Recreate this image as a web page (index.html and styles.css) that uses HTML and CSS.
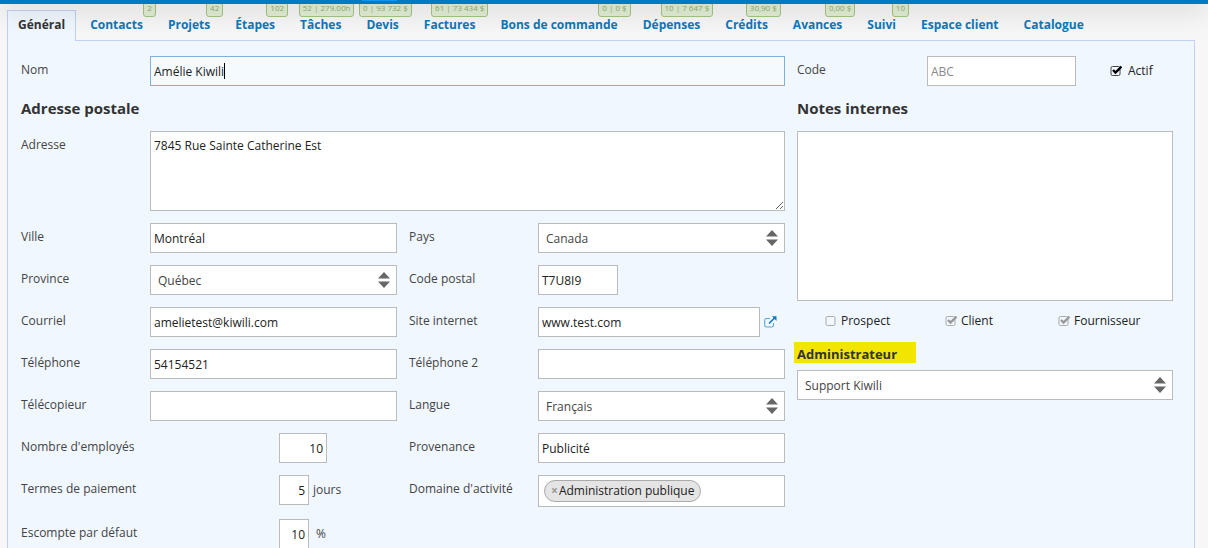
FILE: index.html
```html
<!DOCTYPE html>
<html lang="fr">
<head>
<meta charset="utf-8">
<meta name="viewport" content="width=device-width, initial-scale=1">
<title>Fiche client</title>
<link rel="stylesheet" href="styles.css">
</head>
<body>
<header class="topbar"><span class="topbar-mark"></span></header>
<div class="page">
  <nav class="tabs">
    <a href="#" class="tab active" aria-current="page">Général</a>
    <a href="#" class="tab">Contacts<span class="badge">2</span></a>
    <a href="#" class="tab">Projets<span class="badge">42</span></a>
    <a href="#" class="tab">Étapes<span class="badge">102</span></a>
    <a href="#" class="tab">Tâches<span class="badge">52 | 279.00h</span></a>
    <a href="#" class="tab">Devis<span class="badge">0 | 93 732 $</span></a>
    <a href="#" class="tab">Factures<span class="badge">61 | 73 434 $</span></a>
    <a href="#" class="tab">Bons de commande<span class="badge">0 | 0 $</span></a>
    <a href="#" class="tab">Dépenses<span class="badge">10 | 7 647 $</span></a>
    <a href="#" class="tab">Crédits<span class="badge">30,90 $</span></a>
    <a href="#" class="tab">Avances<span class="badge">0,00 $</span></a>
    <a href="#" class="tab">Suivi<span class="badge">10</span></a>
    <a href="#" class="tab">Espace client</a>
    <a href="#" class="tab">Catalogue</a>
  </nav>
  <form class="panel">
    <div class="main">
      <div class="row wide"><label for="nom">Nom</label><div class="field"><input class="box focused" id="nom" type="text" value="Amélie Kiwili"><span class="caret"></span></div></div>
      <h2 class="wide">Adresse postale</h2>
      <div class="row wide"><label for="adresse">Adresse</label><div class="field"><textarea class="box address" id="adresse">7845 Rue Sainte Catherine Est</textarea></div></div>
      <div class="row"><label for="ville">Ville</label><div class="field"><input class="box" id="ville" type="text" value="Montréal"></div></div>
      <div class="row"><label for="pays">Pays</label><div class="field"><select class="box" id="pays"><option>Canada</option></select></div></div>
      <div class="row"><label for="province">Province</label><div class="field"><select class="box" id="province"><option>Québec</option></select></div></div>
      <div class="row"><label for="cp">Code postal</label><div class="field"><input class="box postal" id="cp" type="text" value="T7U8I9"></div></div>
      <div class="row"><label for="courriel">Courriel</label><div class="field"><input class="box" id="courriel" type="text" value="amelietest@kiwili.com"></div></div>
      <div class="row"><label for="site">Site internet</label><div class="field"><input class="box" id="site" type="text" value="www.test.com"><a class="open" href="#" aria-label="Ouvrir le site"><svg width="13" height="12" viewBox="0 0 13 12" fill="none"><path d="M6 2.5H2.5Q.7 2.5.7 4.3V9.2Q.7 11 2.5 11H7.7Q9.5 11 9.5 9.2V7" stroke="#5ba6d6" stroke-width="1.1"/><path d="M5 7.5 11 1.5" stroke="#0b79bf" stroke-width="1.6"/><path d="M8 .3H12.5V5Z" fill="#0b79bf"/></svg></a></div></div>
      <div class="row"><label for="tel">Téléphone</label><div class="field"><input class="box" id="tel" type="text" value="54154521"></div></div>
      <div class="row"><label for="tel2">Téléphone 2</label><div class="field"><input class="box" id="tel2" type="text"></div></div>
      <div class="row"><label for="fax">Télécopieur</label><div class="field"><input class="box" id="fax" type="text"></div></div>
      <div class="row"><label for="langue">Langue</label><div class="field"><select class="box" id="langue"><option>Français</option></select></div></div>
      <div class="row numeric"><label for="employes">Nombre d'employés</label><div class="field"><input class="box count" id="employes" type="text" value="10"></div></div>
      <div class="row"><label for="prov">Provenance</label><div class="field"><input class="box" id="prov" type="text" value="Publicité"></div></div>
      <div class="row numeric"><label for="termes">Termes de paiement</label><div class="field"><input class="box short" id="termes" type="text" value="5"><span class="unit">jours</span></div></div>
      <div class="row"><span class="label">Domaine d'activité</span><div class="field"><div class="box tags"><span class="tag"><button type="button" aria-label="Retirer">×</button>Administration publique</span></div></div></div>
      <div class="row numeric"><label for="escompte">Escompte par défaut</label><div class="field"><input class="box short" id="escompte" type="text" value="10"><span class="unit percent">%</span></div></div>
    </div>
    <div class="side">
      <div class="row"><label for="code">Code</label><div class="field"><input class="box code" id="code" type="text" placeholder="ABC"><label class="check active-check"><input type="checkbox" checked>Actif</label></div></div>
      <h2><label for="notes">Notes internes</label></h2>
      <textarea class="box notes" id="notes"></textarea>
      <div class="kinds">
        <label class="check"><input type="checkbox" disabled>Prospect</label>
        <label class="check"><input type="checkbox" checked disabled>Client</label>
        <label class="check"><input type="checkbox" checked disabled>Fournisseur</label>
      </div>
      <h3><label for="admin">Administrateur</label></h3>
      <select class="box" id="admin"><option>Support Kiwili</option></select>
    </div>
  </form>
</div>
</body>
</html>
```

FILE: styles.css
```css
* { box-sizing: border-box; }
body {
  margin: 0;
  height: 100vh;
  display: flex;
  flex-direction: column;
  overflow: hidden;
  background: #f7f7f7;
  color: #444;
  font: 12px/20px "Open Sans", sans-serif;
}
.topbar {
  position: relative;
  z-index: 2;
  flex: none;
  height: 4px;
  background: #007ac3;
  box-shadow: 0 0 30px rgba(0, 0, 0, 0.6);
}
.topbar-mark {
  position: absolute;
  top: 0;
  left: 30%;
  width: 35px;
  height: 1px;
  background: #0c96f5;
}
.page {
  flex: 1;
  display: flex;
  flex-direction: column;
  padding: 6px 13px 0 7px;
}
.tabs { display: flex; gap: 3px; flex: none; }
.tab {
  position: relative;
  height: 30px;
  padding: 4px 10px 0;
  border: 1px solid transparent;
  border-bottom: 0;
  color: #0b78bb;
  font-size: 12px;
  font-weight: 700;
  line-height: 20px;
  text-decoration: none;
  white-space: nowrap;
}
.tab.active {
  z-index: 1;
  height: 31px;
  margin-bottom: -1px;
  border-color: #c3d0f5;
  background: #f0f7ff;
  color: #333;
}
.badge {
  position: absolute;
  right: -3px;
  bottom: 23px;
  padding: 0 3px 1px;
  border: 1px solid #a3c684;
  border-radius: 3px;
  background: #e3efd5;
  color: #8daf71;
  font-size: 8px;
  font-weight: 400;
  line-height: 14px;
}
.panel {
  flex: 1;
  display: grid;
  grid-template-columns: repeat(3, minmax(0, 1fr));
  gap: 12px;
  padding: 15px 21px 0 13px;
  border: 1px solid #c3d0f5;
  border-bottom: 0;
  background: #f0f7ff;
}
.main {
  grid-column: span 2;
  display: grid;
  grid-template-columns: repeat(2, minmax(0, 1fr));
  gap: 12px;
  align-content: start;
}
.wide { grid-column: 1 / -1; }
.row { display: flex; align-items: flex-start; }
.row > label, .label { flex: none; width: 129px; line-height: 28px; }
.numeric > label { width: 258px; }
.field { position: relative; flex: 1; min-width: 0; display: flex; }
.box {
  width: 100%;
  height: 30px;
  margin: 0;
  padding: 1px 3px 0;
  border: 1px solid #bbb;
  border-radius: 0;
  outline: 0;
  background: #fff;
  color: #222;
  font: inherit;
}
.box::placeholder { color: #888; }
.focused { border-color: #80b0dc; background: #f5faff; }
.caret {
  position: absolute;
  top: 7px;
  left: 74px;
  width: 1px;
  height: 16px;
  background: #000;
}
select.box {
  appearance: none;
  padding: 1px 24px 0 7px;
  color: #444;
  background: #fff url("data:image/svg+xml,%3Csvg xmlns='http://www.w3.org/2000/svg' width='12' height='16'%3E%3Cpath d='M0 6.5 6 0l6 6.5zM0 9.5h12L6 16z' fill='%23666'/%3E%3C/svg%3E") no-repeat right 6px center;
}
textarea.box { display: block; padding-top: 4px; line-height: 20px; }
.address { height: 80px; resize: vertical; }
h2, h3 { margin: 0; color: #333; font-weight: 700; }
h2 { height: 21px; font-size: 15px; line-height: 20px; }
.box.postal { width: 80px; }
.box.count { width: 48px; text-align: right; }
.box.short { width: 30px; text-align: right; }
.unit { padding-left: 4px; line-height: 30px; }
.percent { padding-left: 7px; }
.open { flex: none; width: 25px; padding: 9px 0 0 4px; line-height: 0; }
.tags { height: 32px; padding: 4px 5px; }
.tag {
  display: inline-flex;
  align-items: center;
  height: 22px;
  padding: 0 6px;
  border: 1px solid #aaa;
  border-radius: 11px;
  background: #e4e4e4;
}
.tag button {
  padding: 0 1px 0 0;
  border: 0;
  background: none;
  color: #999;
  font: 700 12px/18px "Open Sans", sans-serif;
}
.side { display: flex; flex-direction: column; }
.side .row { margin-bottom: 12px; }
.side .row > label { width: 130px; }
.box.code { width: 149px; }
.check { display: inline-flex; align-items: center; gap: 4px; color: #222; line-height: 28px; }
.active-check { gap: 6px; margin-left: 34px; }
.check input {
  appearance: none;
  width: 12px;
  height: 12px;
  margin: 0;
  background: url("data:image/svg+xml,%3Csvg xmlns='http://www.w3.org/2000/svg' width='12' height='12' fill='none'%3E%3Crect x='1' y='1.5' width='9' height='9' rx='1.5' stroke='%23aaa'/%3E%3C/svg%3E") no-repeat;
}
.check input:checked { background-image: url("data:image/svg+xml,%3Csvg xmlns='http://www.w3.org/2000/svg' width='12' height='12' fill='none'%3E%3Crect x='1' y='1.5' width='9' height='9' rx='1.5' stroke='%23444'/%3E%3Cpath d='m3 5 2.5 2.5 6-6' stroke='%23000' stroke-width='2.4'/%3E%3C/svg%3E"); }
.check input:checked:disabled { background-image: url("data:image/svg+xml,%3Csvg xmlns='http://www.w3.org/2000/svg' width='12' height='12' fill='none'%3E%3Crect x='1' y='1.5' width='9' height='9' rx='1.5' stroke='%23aaa'/%3E%3Cpath d='m3 5 2.5 2.5 6-6' stroke='%23999' stroke-width='2.4'/%3E%3C/svg%3E"); }
.notes { height: 170px; margin-top: 12px; resize: none; }
.kinds {
  display: grid;
  grid-template-columns: 120fr 113fr 115fr;
  margin: 6px 0 7px 28px;
}
h3 { height: 28px; margin-left: -3px; font-size: 13px; line-height: 25px; }
h3 label { display: block; width: 122px; height: 21px; padding-left: 3px; background: #f2e600; }
```
